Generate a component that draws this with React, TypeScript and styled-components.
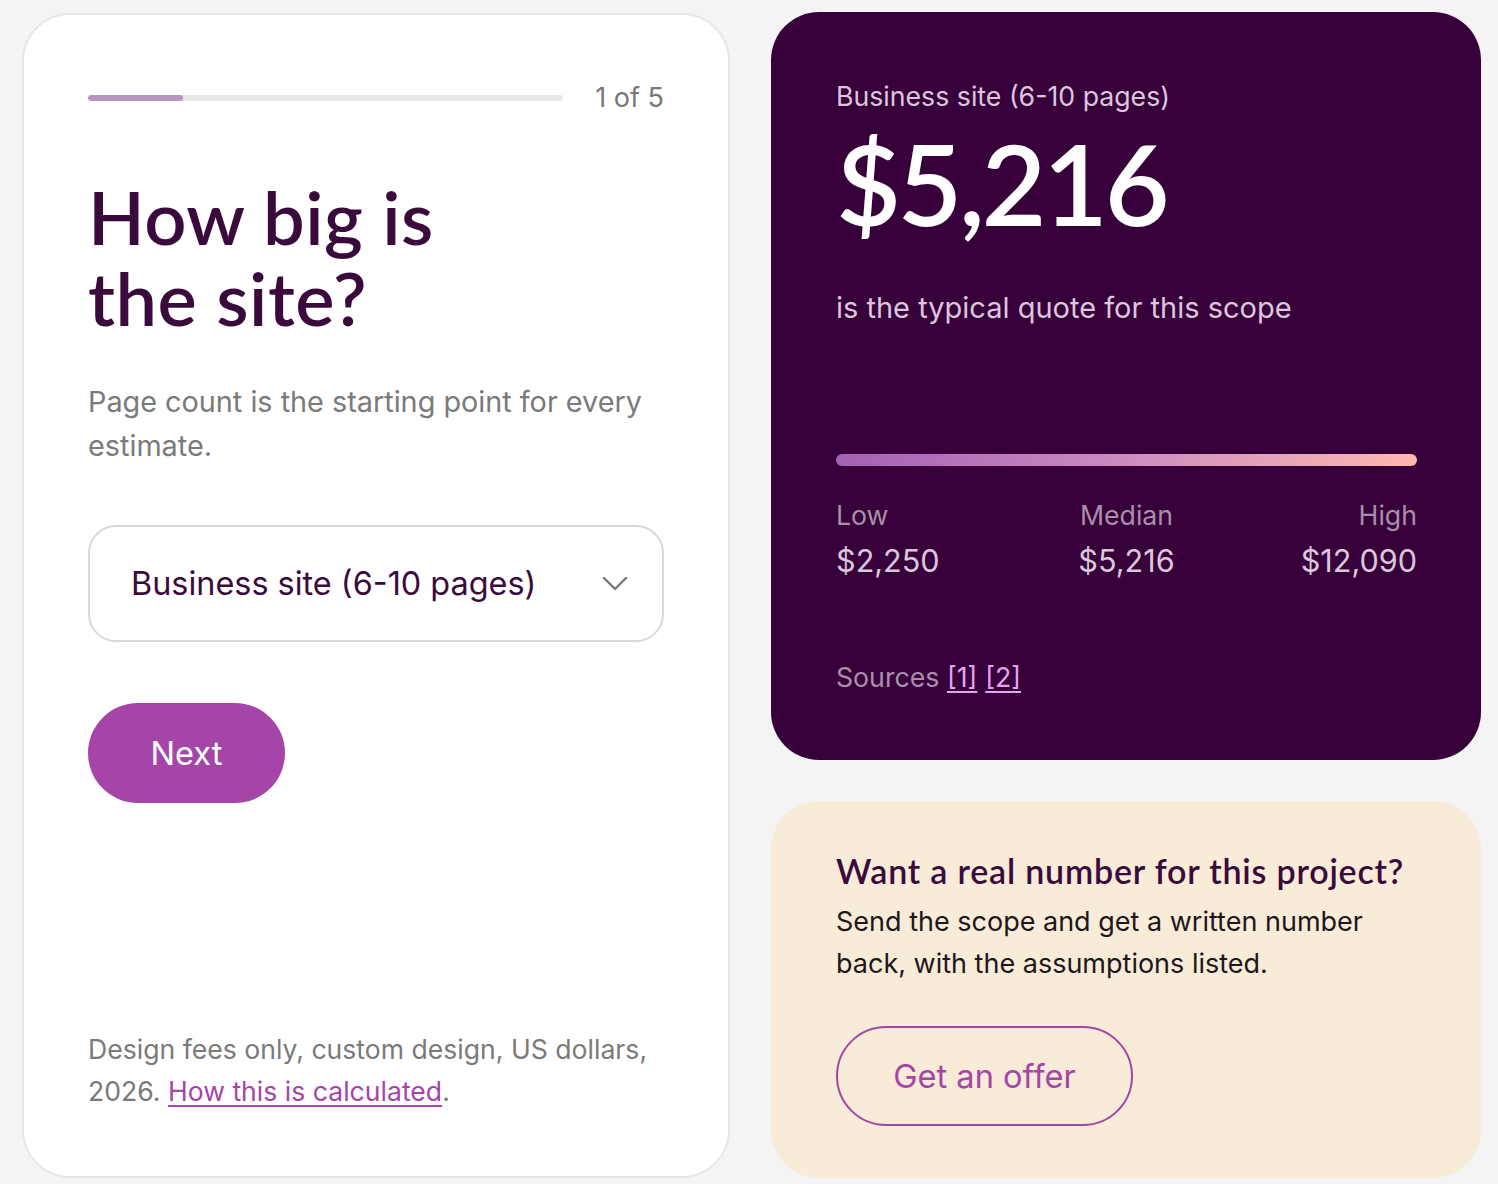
import styled, { createGlobalStyle } from 'styled-components';

const GlobalStyle = createGlobalStyle`
  html, body {
    margin: 0;
    padding: 0;
    background: #f4f4f4;
  }
  body {
    font-family: Inter, Roboto, "Liberation Sans", sans-serif;
  }
`;

const Page = styled.div`
  display: grid;
  grid-template-columns: 708px 710px;
  column-gap: 41px;
  padding: 12px 17px 6px 22px;
  align-items: stretch;
`;

const QuestionCard = styled.section`
  display: flex;
  flex-direction: column;
  margin-top: 1px;
  background: #fff;
  border: 2px solid #e6e6e6;
  border-radius: 48px;
  padding: 68px 64px 64px;
`;

const ProgressRow = styled.div`
  display: flex;
  align-items: center;
  gap: 32px;
  height: 30px;
`;

const Track = styled.div`
  flex: 1;
  height: 6px;
  border-radius: 3px;
  background: #e8e8ea;
  overflow: hidden;
`;

const TrackFill = styled.div`
  height: 100%;
  background: #b995c1;
  border-radius: 3px;
`;

const StepText = styled.span`
  font-size: 27px;
  line-height: 30px;
  color: #777;
`;

const Title = styled.h1`
  margin: 63px 0 0;
  font-family: Lato, "Noto Sans", sans-serif;
  font-weight: 600;
  font-size: 74px;
  line-height: 81px;
  letter-spacing: 0.5px;
  color: #3a0a3c;
`;

const Lead = styled.p`
  margin: 42px 0 0;
  font-size: 28.8px;
  line-height: 44px;
  color: #7a7a7a;
`;

const Select = styled.div`
  margin-top: 57px;
  height: 117px;
  box-sizing: border-box;
  display: flex;
  align-items: center;
  justify-content: space-between;
  padding: 0 34px 0 41px;
  border: 2px solid #d9d9d9;
  border-radius: 28px;
  font-size: 32.4px;
  color: #3a0a3c;
`;

const PillButton = styled.button<{ $outline?: boolean }>`
  align-self: flex-start;
  box-sizing: border-box;
  height: 100px;
  border-radius: 50px;
  font-family: Inter, Roboto, "Liberation Sans", sans-serif;
  font-size: 32.6px;
  cursor: pointer;
  background: ${(p) => (p.$outline ? 'transparent' : '#a545a8')};
  color: ${(p) => (p.$outline ? '#a545a8' : '#fff')};
  border: ${(p) => (p.$outline ? '2px solid #a545a8' : 'none')};
`;

const NextButton = styled(PillButton)`
  margin-top: 61px;
  width: 197px;
`;

const OfferButton = styled(PillButton)`
  margin-top: 41px;
  width: 297px;
`;

const Footnote = styled.p`
  margin: auto 0 0;
  font-size: 26.6px;
  line-height: 42px;
  color: #7a7a7a;
`;

const Link = styled.a<{ $light?: boolean }>`
  color: ${(p) => (p.$light ? '#e3a4f2' : '#a545a8')};
  text-decoration: underline;
  text-underline-offset: 4px;
  text-decoration-thickness: 2px;
`;

const Column = styled.div`
  display: flex;
  flex-direction: column;
  gap: 41px;
`;

const ResultCard = styled.section`
  display: flex;
  flex-direction: column;
  height: 748px;
  box-sizing: border-box;
  background: #38003a;
  border-radius: 48px;
  padding: 67px 64px 0 65px;
`;

const ScopeLabel = styled.div`
  font-size: 26.7px;
  line-height: 34px;
  color: #dcc6de;
`;

const BigPrice = styled.div`
  margin-top: 14px;
  font-family: Lato, "Noto Sans", sans-serif;
  font-weight: 600;
  font-size: 112px;
  line-height: 1;
  letter-spacing: -3.4px;
  color: #fff;
`;

const Subline = styled.div`
  margin-top: 51px;
  font-size: 29px;
  line-height: 36px;
  color: #dcc6de;
`;

const Range = styled.div`
  margin-top: 128px;
  height: 12px;
  border-radius: 6px;
  background: linear-gradient(90deg, #a361b4 0%, #c888c0 45%, #ffb9b0 100%);
`;

const Stats = styled.div`
  margin-top: 33px;
  display: grid;
  grid-template-columns: 1fr 1fr 1fr;
`;

const Stat = styled.div<{ $align: 'left' | 'center' | 'right' }>`
  text-align: ${(p) => p.$align};
  display: flex;
  flex-direction: column;
  gap: 11px;
`;

const StatLabel = styled.span`
  font-size: 26.7px;
  color: #a88fab;
`;

const StatValue = styled.span`
  font-size: 30.6px;
  color: #d9c8db;
`;

const Sources = styled.div`
  margin-top: 82px;
  font-size: 26.7px;
  color: #a88fab;
  a + a {
    margin-left: 8px;
  }
`;

const OfferCard = styled.section`
  background: #f8ecd9;
  border-radius: 48px;
  padding: 46px 64px 52px 65px;
  display: flex;
  flex-direction: column;
`;

const OfferTitle = styled.h2`
  margin: 0;
  font-family: Lato, "Noto Sans", sans-serif;
  font-weight: 600;
  font-size: 34px;
  line-height: 48px;
  letter-spacing: 0.8px;
  color: #3a0a3c;
`;

const OfferText = styled.p`
  margin: 6px 0 0;
  font-size: 27px;
  line-height: 42px;
  color: #1e1619;
`;

function Chevron() {
  return (
    <svg width="26" height="16" viewBox="0 0 26 16" fill="none">
      <path d="M2 2l11 11L24 2" stroke="#777" strokeWidth="2.4" strokeLinecap="round" strokeLinejoin="round" />
    </svg>
  );
}

export default function App() {
  const step = 1;
  const total = 5;
  return (
    <>
      <GlobalStyle />
      <Page>
        <QuestionCard>
          <ProgressRow>
            <Track>
              <TrackFill style={{ width: `${(step / total) * 100}%` }} />
            </Track>
            <StepText>
              {step} of {total}
            </StepText>
          </ProgressRow>
          <Title>
            How big is
            <br />
            the site?
          </Title>
          <Lead>Page count is the starting point for every estimate.</Lead>
          <Select>
            <span>Business site (6-10 pages)</span>
            <Chevron />
          </Select>
          <NextButton>Next</NextButton>
          <Footnote>
            Design fees only, custom design, US dollars, 2026. <Link href="#">How this is calculated</Link>.
          </Footnote>
        </QuestionCard>

        <Column>
          <ResultCard>
            <ScopeLabel>Business site (6-10 pages)</ScopeLabel>
            <BigPrice>$5,216</BigPrice>
            <Subline>is the typical quote for this scope</Subline>
            <Range />
            <Stats>
              <Stat $align="left">
                <StatLabel>Low</StatLabel>
                <StatValue>$2,250</StatValue>
              </Stat>
              <Stat $align="center">
                <StatLabel>Median</StatLabel>
                <StatValue>$5,216</StatValue>
              </Stat>
              <Stat $align="right">
                <StatLabel>High</StatLabel>
                <StatValue>$12,090</StatValue>
              </Stat>
            </Stats>
            <Sources>
              Sources{' '}
              <Link $light href="#">
                [1]
              </Link>
              <Link $light href="#">
                [2]
              </Link>
            </Sources>
          </ResultCard>

          <OfferCard>
            <OfferTitle>Want a real number for this project?</OfferTitle>
            <OfferText>
              Send the scope and get a written number
              <br />
              back, with the assumptions listed.
            </OfferText>
            <OfferButton $outline>Get an offer</OfferButton>
          </OfferCard>
        </Column>
      </Page>
    </>
  );
}
